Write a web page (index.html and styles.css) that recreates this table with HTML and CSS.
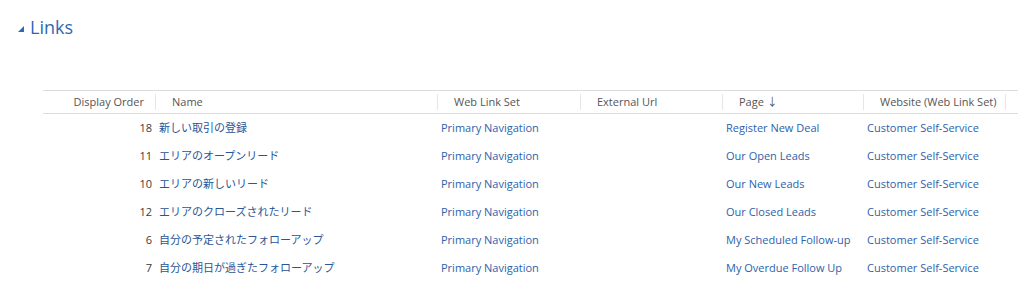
FILE: index.html
```html
<!DOCTYPE html>
<html>
<head>
<meta charset="utf-8">
<link rel="stylesheet" href="styles.css">
</head>
<body>
<div class="section-title">
  <svg class="twisty" width="6" height="6" viewBox="0 0 6 6"><polygon points="6,0 6,6 0,6" fill="#2e69b3"/></svg>
  <span class="title-text">Links</span>
</div>
<div class="grid">
  <div class="row head">
    <div class="c c1">Display Order</div>
    <div class="c c2">Name</div>
    <div class="c c3">Web Link Set</div>
    <div class="c c4">External Url</div>
    <div class="c c5">Page <span class="arrow">&#x2193;</span></div>
    <div class="c c6">Website (Web Link Set)</div>
    <div class="c c7"></div>
  </div>
  <div class="row">
    <div class="c c1">18</div>
    <div class="c c2">新しい取引の登録</div>
    <div class="c c3">Primary Navigation</div>
    <div class="c c4"></div>
    <div class="c c5">Register New Deal</div>
    <div class="c c6">Customer Self-Service</div>
  </div>
  <div class="row">
    <div class="c c1">11</div>
    <div class="c c2">エリアのオープンリード</div>
    <div class="c c3">Primary Navigation</div>
    <div class="c c4"></div>
    <div class="c c5">Our Open Leads</div>
    <div class="c c6">Customer Self-Service</div>
  </div>
  <div class="row">
    <div class="c c1">10</div>
    <div class="c c2">エリアの新しいリード</div>
    <div class="c c3">Primary Navigation</div>
    <div class="c c4"></div>
    <div class="c c5">Our New Leads</div>
    <div class="c c6">Customer Self-Service</div>
  </div>
  <div class="row">
    <div class="c c1">12</div>
    <div class="c c2">エリアのクローズされたリード</div>
    <div class="c c3">Primary Navigation</div>
    <div class="c c4"></div>
    <div class="c c5">Our Closed Leads</div>
    <div class="c c6">Customer Self-Service</div>
  </div>
  <div class="row">
    <div class="c c1">6</div>
    <div class="c c2">自分の予定されたフォローアップ</div>
    <div class="c c3">Primary Navigation</div>
    <div class="c c4"></div>
    <div class="c c5">My Scheduled Follow-up</div>
    <div class="c c6">Customer Self-Service</div>
  </div>
  <div class="row">
    <div class="c c1">7</div>
    <div class="c c2">自分の期日が過ぎたフォローアップ</div>
    <div class="c c3">Primary Navigation</div>
    <div class="c c4"></div>
    <div class="c c5">My Overdue Follow Up</div>
    <div class="c c6">Customer Self-Service</div>
  </div>
</div>
</body>
</html>
```
FILE: styles.css
```css
html, body {
  margin: 0;
  padding: 0;
  background: #ffffff;
}
body {
  font-family: "Open Sans", "Noto Sans CJK JP", sans-serif;
  font-size: 11px;
  color: #444444;
}
.section-title {
  display: flex;
  align-items: center;
  gap: 7px;
  padding: 12px 0 0 18px;
  height: 30px;
}
.twisty {
  margin-top: 3px;
}
.title-text {
  font-family: "Open Sans", sans-serif;
  font-size: 18px;
  color: #2e69b3;
  font-weight: 400;
  margin-left: -1px;
}
.grid {
  margin: 48px 0 0 43px;
  width: 975px;
}
.row {
  display: grid;
  grid-template-columns: 112px 282px 143px 142px 141px 142px 13px;
  height: 28px;
  box-sizing: border-box;
  padding-bottom: 2px;
  align-items: center;
}
.row.head {
  height: 24px;
  padding-bottom: 0;
  border-top: 1px solid #dcdcdc;
  border-bottom: 1px solid #dcdcdc;
  color: #555555;
}
.head .c {
  padding-left: 16px;
  border-left: 1px solid #e6e6e6;
  height: 16px;
  line-height: 16px;
}
.head .c1 {
  border-left: none;
  text-align: right;
  padding: 0 11px 0 0;
}
.c {
  white-space: nowrap;
  overflow: hidden;
}
.row:not(.head) .c {
  padding-left: 4px;
  color: #2d62ac;
}
.row:not(.head) .c1 {
  text-align: right;
  padding: 0 3px 0 0;
  color: #3a3a3a;
}
.row:not(.head) .c2 {
  color: #2a5596;
}
.arrow {
  font-size: 11px;
}
```
